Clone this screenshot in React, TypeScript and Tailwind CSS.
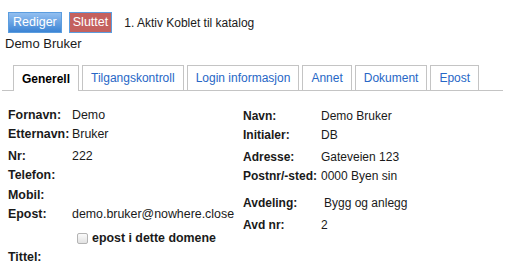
import React from 'react';

const tabs = ['Generell', 'Tilgangskontroll', 'Login informasjon', 'Annet', 'Dokument', 'Epost'];

const Row = ({ label, value, h = 19, mt = 0, lw = 'w-[64px]', vcls = '' }: { label: string; value?: string; h?: number; mt?: number; lw?: string; vcls?: string }) => (
  <div className="flex items-center" style={{ height: h, marginTop: mt }}>
    <span className={`${lw} shrink-0 font-bold text-[#1a1a1a]`}>{label}</span>
    {value && <span className={`text-[#1a1a1a] ${vcls}`}>{value}</span>}
  </div>
);

export default function App() {
  return (
    <div className="w-[505px] h-[273px] bg-white overflow-hidden text-[12px] text-[#1a1a1a]" style={{ fontFamily: '"Liberation Sans", Arial, sans-serif' }}>
      <div className="flex items-center pt-[12px] pl-[8px]">
        <button className="h-[21px] px-[4px] border border-[#5b9ddf] bg-gradient-to-b from-[#92bff0] to-[#3b84d4] text-white text-[12.5px] leading-none">
          Rediger
        </button>
        <button className="ml-[7px] h-[21px] px-[3px] border border-[#5b9ddf] bg-[#c4615e] text-white text-[12.5px] leading-none">
          Sluttet
        </button>
        <span className="ml-[12px] text-[12px]">1. Aktiv Koblet til katalog</span>
      </div>
      <div className="pl-[5px] mt-[3px] text-[13px] leading-[16px]">Demo Bruker</div>

      <div className="mt-[13px] mx-[2px] flex items-end gap-[3px] pl-[11px] border-b border-[#c4c4c4] h-[26px]">
        {tabs.map((t, i) => (
          <div
            key={t}
            className={
              i === 0
                ? 'h-[26px] -mb-px px-[8px] flex items-center border border-b-0 border-[#c4c4c4] bg-white font-bold text-[12px] text-black'
                : 'h-[25px] px-[8px] flex items-center border border-b-0 border-[#c4c4c4] text-[12px] text-[#2767c6]'
            }
          >
            {t}
          </div>
        ))}
      </div>

      <div className="flex pt-[15px]">
        <div className="pl-[8px] w-[243px] shrink-0 text-[12.4px]">
          <Row label="Fornavn:" value="Demo" />
          <Row label="Etternavn:" value="Bruker" />
          <Row label="Nr:" value="222" mt={3} />
          <Row label="Telefon:" />
          <Row label="Mobil:" mt={1} />
          <Row label="Epost:" value="demo.bruker@nowhere.close" h={18} />
          <div className="flex items-center pl-[69px]" style={{ height: 19, marginTop: 6 }}>
            <span className="w-[11px] h-[11px] rounded-[2px] border border-[#b4b4b4] bg-gradient-to-b from-[#fafafa] to-[#e2e2e2]" />
            <span className="ml-[4px] font-bold">epost i dette domene</span>
          </div>
          <Row label="Tittel:" />
        </div>
        <div className="text-[12px]">
          <Row label="Navn:" value="Demo Bruker" lw="w-[78px]" />
          <Row label="Initialer:" value="DB" lw="w-[78px]" />
          <Row label="Adresse:" value="Gateveien 123" lw="w-[78px]" mt={3} />
          <Row label="Postnr/-sted:" value="0000 Byen sin" lw="w-[78px]" />
          <Row label="Avdeling:" value="Bygg og anlegg" lw="w-[78px]" mt={8} vcls="pl-[3px]" />
          <Row label="Avd nr:" value="2" lw="w-[78px]" mt={3} />
        </div>
      </div>
    </div>
  );
}
